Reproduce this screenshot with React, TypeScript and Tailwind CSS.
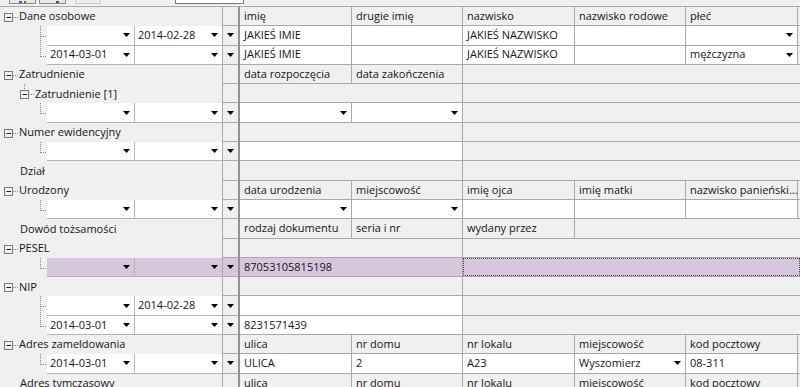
import React from 'react';

type Cell = {
  w: string;
  text?: string;
  bg?: 'white' | 'gray' | 'sel';
  arrow?: boolean;
  br?: boolean;
};

type LeftNode =
  | { kind: 'node'; label: string; level: 0 | 1 | 'leaf' }
  | { kind: 'input'; a: string; b: string; last: boolean };

type RowDef = { left: LeftNode; cells: Cell[]; sel?: boolean };

const C = ['w-[112px]', 'w-[111px]', 'w-[112px]', 'w-[111px]', 'w-[112px]'];

function Arrow() {
  return (
    <svg width="7" height="4" viewBox="0 0 7 4" className="shrink-0">
      <path d="M0 0H7L3.5 4Z" fill="#000" />
    </svg>
  );
}

function hdr(texts: string[]): Cell[] {
  return texts.map((t, i) => ({ w: C[i], text: t, bg: 'gray', br: true }));
}

const empty: Cell[] = [{ w: 'w-[223px]', bg: 'gray', br: true }];

const rows: RowDef[] = [
  { left: { kind: 'node', label: 'Dane osobowe', level: 0 }, cells: hdr(['imię', 'drugie imię', 'nazwisko', 'nazwisko rodowe', 'płeć']) },
  {
    left: { kind: 'input', a: '', b: '2014-02-28', last: false },
    cells: [
      { w: C[0], text: 'JAKIEŚ IMIE', bg: 'white', br: true },
      { w: C[1], text: '', bg: 'white', br: true },
      { w: C[2], text: 'JAKIEŚ NAZWISKO', bg: 'white', br: true },
      { w: C[3], text: '', bg: 'white', br: true },
      { w: C[4], text: '', bg: 'white', br: true, arrow: true },
    ],
  },
  {
    left: { kind: 'input', a: '2014-03-01', b: '', last: true },
    cells: [
      { w: C[0], text: 'JAKIEŚ IMIE', bg: 'white', br: true },
      { w: C[1], text: '', bg: 'white', br: true },
      { w: C[2], text: 'JAKIEŚ NAZWISKO', bg: 'white', br: true },
      { w: C[3], text: '', bg: 'white', br: true },
      { w: C[4], text: 'mężczyzna', bg: 'white', br: true, arrow: true },
    ],
  },
  { left: { kind: 'node', label: 'Zatrudnienie', level: 0 }, cells: hdr(['data rozpoczęcia', 'data zakończenia']) },
  { left: { kind: 'node', label: 'Zatrudnienie [1]', level: 1 }, cells: empty },
  {
    left: { kind: 'input', a: '', b: '', last: true },
    cells: [
      { w: C[0], bg: 'white', br: true, arrow: true },
      { w: C[1], bg: 'white', br: true, arrow: true },
    ],
  },
  { left: { kind: 'node', label: 'Numer ewidencyjny', level: 0 }, cells: empty },
  { left: { kind: 'input', a: '', b: '', last: true }, cells: [{ w: 'w-[223px]', bg: 'white', br: true }] },
  { left: { kind: 'node', label: 'Dział', level: 'leaf' }, cells: empty },
  { left: { kind: 'node', label: 'Urodzony', level: 0 }, cells: hdr(['data urodzenia', 'miejscowość', 'imię ojca', 'imię matki', 'nazwisko panieński...']) },
  {
    left: { kind: 'input', a: '', b: '', last: true },
    cells: [
      { w: C[0], bg: 'white', br: true, arrow: true },
      { w: C[1], bg: 'white', br: true, arrow: true },
      { w: C[2], bg: 'white', br: true },
      { w: C[3], bg: 'white', br: true },
      { w: C[4], bg: 'white', br: true },
    ],
  },
  { left: { kind: 'node', label: 'Dowód tożsamości', level: 'leaf' }, cells: hdr(['rodzaj dokumentu', 'seria i nr', 'wydany przez']) },
  { left: { kind: 'node', label: 'PESEL', level: 0 }, cells: empty },
  {
    sel: true,
    left: { kind: 'input', a: '', b: '', last: true },
    cells: [{ w: 'w-[223px]', text: '87053105815198', bg: 'sel', br: true }],
  },
  { left: { kind: 'node', label: 'NIP', level: 0 }, cells: empty },
  { left: { kind: 'input', a: '', b: '2014-02-28', last: false }, cells: [{ w: 'w-[223px]', bg: 'white', br: true }] },
  { left: { kind: 'input', a: '2014-03-01', b: '', last: true }, cells: [{ w: 'w-[223px]', text: '8231571439', bg: 'white', br: true }] },
  { left: { kind: 'node', label: 'Adres zameldowania', level: 0 }, cells: hdr(['ulica', 'nr domu', 'nr lokalu', 'miejscowość', 'kod pocztowy']) },
  {
    left: { kind: 'input', a: '2014-03-01', b: '', last: true },
    cells: [
      { w: C[0], text: 'ULICA', bg: 'white', br: true },
      { w: C[1], text: '2', bg: 'white', br: true },
      { w: C[2], text: 'A23', bg: 'white', br: true },
      { w: C[3], text: 'Wyszomierz', bg: 'white', br: true, arrow: true },
      { w: C[4], text: '08-311', bg: 'white', br: true },
    ],
  },
  { left: { kind: 'node', label: 'Adres tymczasowy', level: 'leaf' }, cells: hdr(['ulica', 'nr domu', 'nr lokalu', 'miejscowość', 'kod pocztowy']) },
];

function NodeLeft({ label, level }: { label: string; level: 0 | 1 | 'leaf' }) {
  const pad = level === 0 ? 'pl-[19px]' : level === 1 ? 'pl-[35px]' : 'pl-[20px]';
  return (
    <div className={`flex-1 h-full flex items-center ${pad}`}>
      {level === 0 && (
        <svg width="19" height="19" viewBox="0 0 19 19" className="shrink-0 -ml-[19px]">
          <rect x="4.5" y="6.5" width="8" height="8" fill="none" stroke="#7a7a7a" />
          <line x1="6.5" y1="10.5" x2="11" y2="10.5" stroke="#222" />
          <line x1="13" y1="10.5" x2="18" y2="10.5" stroke="#8a8a8a" strokeDasharray="1 1" />
        </svg>
      )}
      {level === 1 && (
        <svg width="35" height="19" viewBox="0 0 35 19" className="shrink-0 -ml-[35px]">
          <line x1="24.5" y1="0" x2="24.5" y2="6" stroke="#8a8a8a" strokeDasharray="1 1" />
          <rect x="20.5" y="6.5" width="8" height="8" fill="none" stroke="#7a7a7a" />
          <line x1="22.5" y1="10.5" x2="27" y2="10.5" stroke="#222" />
          <line x1="29" y1="10.5" x2="34" y2="10.5" stroke="#8a8a8a" strokeDasharray="1 1" />
        </svg>
      )}
      <span className="whitespace-nowrap">{label}</span>
    </div>
  );
}

function InputLeft({ a, b, last, sel }: { a: string; b: string; last: boolean; sel?: boolean }) {
  const bg = sel ? 'bg-[#d8c6dc]' : 'bg-white';
  return (
    <div className="flex-1 h-full flex">
      <svg width="47" height="19" viewBox="0 0 47 19" className="shrink-0">
        <line x1="40.5" y1="0" x2="40.5" y2={last ? 11 : 19} stroke="#8a8a8a" strokeDasharray="1 1" />
        <line x1="41" y1="10.5" x2="47" y2="10.5" stroke="#8a8a8a" strokeDasharray="1 1" />
      </svg>
      <div className={`w-[88px] h-full flex items-center pl-[3px] pr-[4px] border-r border-b border-[#b4b4b4] ${bg}`}>
        <span className="flex-1 whitespace-nowrap">{a}</span>
        <Arrow />
      </div>
      <div className={`flex-1 h-full flex items-center pl-[3px] pr-[4px] border-b border-[#b4b4b4] ${bg}`}>
        <span className="flex-1 whitespace-nowrap">{b}</span>
        <Arrow />
      </div>
    </div>
  );
}

function DataCell({ c }: { c: Cell }) {
  const bg = c.bg === 'white' ? 'bg-white' : c.bg === 'sel' ? 'bg-[#d8c6dc]' : 'bg-[#f0f0f0]';
  return (
    <div
      className={`${c.w} shrink-0 h-full flex items-center pl-[4px] pr-[4px] border-b border-[#a9a9a9] ${c.br ? 'border-r' : ''} ${bg}`}
    >
      <span className="flex-1 whitespace-nowrap">{c.text}</span>
      {c.arrow && <Arrow />}
    </div>
  );
}

function Row({ r }: { r: RowDef }) {
  const isInput = r.left.kind === 'input';
  return (
    <div className="h-[19.3px] flex">
      <div className="w-[223px] shrink-0 h-full flex border-r border-[#a9a9a9]">
        {r.left.kind === 'node' ? (
          <NodeLeft label={r.left.label} level={r.left.level} />
        ) : (
          <InputLeft a={r.left.a} b={r.left.b} last={r.left.last} sel={r.sel} />
        )}
      </div>
      <div
        className={`w-[15px] shrink-0 h-full flex items-center justify-center border-b border-[#a9a9a9] ${
          r.sel ? 'bg-[#d8c6dc]' : 'bg-[#f0f0f0]'
        }`}
      >
        {isInput && <Arrow />}
      </div>
      <div className="w-[2px] shrink-0 h-full bg-[#929292]" />
      {r.cells.map((c, i) => (
        <DataCell key={i} c={c} />
      ))}
      {r.sel ? (
        <div className="flex-1 h-full border-b border-[#a9a9a9] bg-[#d8c6dc]">
          <div className="h-full border border-dotted border-[#4a4a4a]" />
        </div>
      ) : (
        <div className="flex-1 h-full border-b border-[#a9a9a9] bg-[#f0f0f0]" />
      )}
    </div>
  );
}

export default function App() {
  return (
    <div
      className="w-[800px] h-[387px] overflow-hidden bg-[#f0f0f0] text-[11px] leading-normal text-[#141420]"
      style={{ fontFamily: '"Open Sans", "Noto Sans", sans-serif' }}
    >
      <div className="h-[6px] flex items-start">
        <div className="ml-[9px] w-[27px] h-[4px] border-x border-b border-[#8c8c8c] bg-[#e8e8e8] flex justify-center gap-[2px] items-end">
          <span className="w-[3px] h-[2px] bg-[#3060c0]" />
          <span className="w-[2px] h-[2px] bg-[#d03030]" />
        </div>
        <div className="ml-[3px] w-[27px] h-[4px] border-x border-b border-[#8c8c8c] bg-[#e8e8e8] flex justify-center items-end">
          <span className="ml-[10px] w-[3px] h-[2px] bg-[#704040]" />
        </div>
        <div className="ml-[9px] w-[26px] h-[4px] border-x border-b border-[#c8c8c8] bg-[#ececec]" />
        <div className="ml-[74px] w-[69px] h-[4px] border-x border-b border-[#7a7a7a] bg-white" />
      </div>
      <div className="border-t border-[#a9a9a9]">
        {rows.map((r, i) => (
          <Row key={i} r={r} />
        ))}
      </div>
    </div>
  );
}
